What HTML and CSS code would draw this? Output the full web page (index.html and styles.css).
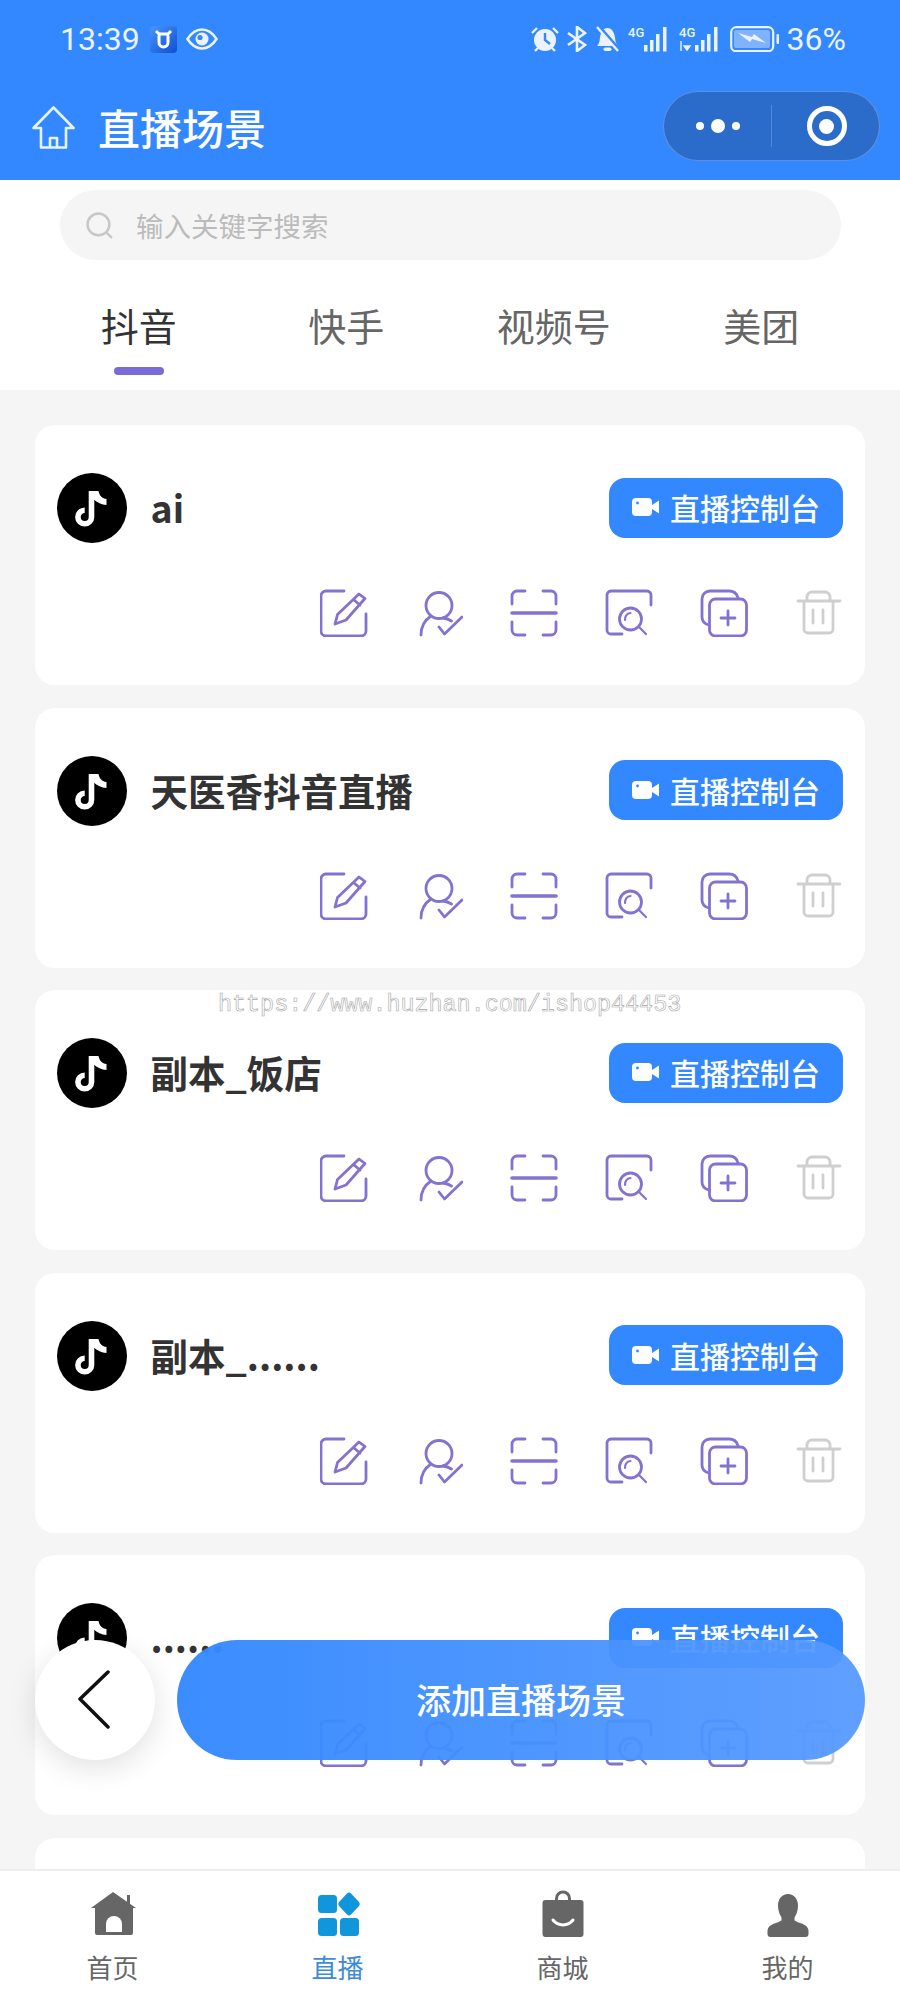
FILE: index.html
```html
<!DOCTYPE html>
<html>

<head>
    <title>直播场景</title>
    <link rel="stylesheet" href="styles.css">
</head>

<body>
    <!-- shared icons -->
    <svg class="defs" width="0" height="0">
        <symbol id="i-tiktok" viewBox="0 0 70 70">
            <path d="M34.500 18V44a6.800 6.800 0 1 1-6.800-6.800" fill="none" stroke="#fff" stroke-width="5.600" />
            <path d="M36.500 18h5c.8 4.500 3.600 7.500 8 8v6c-4.800-.2-9.500-2.400-13-5.800z" fill="#fff" />
        </symbol>
        <symbol id="i-camera" viewBox="0 0 28 20">
            <rect x="0" y="1" width="20" height="18" rx="4" fill="#fff" />
            <path d="M20 8l7-4.500v13l-7-4.500z" fill="#fff" />
            <circle cx="5.500" cy="6" r="1.400" fill="#3388ff" />
        </symbol>
        <symbol id="i-edit" viewBox="0 0 48 48">
            <path d="M24 2H6a5 5 0 0 0-5 5V42a5 5 0 0 0 5 5H41a5 5 0 0 0 5-5V25" />
            <path d="M39 5l6 4.500L26 31l-11 4 2.500-9.500zM34 11l6 5" />
        </symbol>
        <symbol id="i-check" viewBox="0 0 48 48">
            <circle cx="24" cy="16.500" r="13" />
            <path d="M6 46C6 37 10 31 16 27M28 29c3 .4 6 1.500 8.500 3M24 38l5.500 7L47 28" />
        </symbol>
        <symbol id="i-scan" viewBox="0 0 48 48">
            <path d="M2 15V7a5 5 0 0 1 5-5H15M33 2h8a5 5 0 0 1 5 5v8M2 33v8a5 5 0 0 0 5 5h8M33 46h8a5 5 0 0 0 5-5v-8" />
            <path d="M2 24H46" stroke-width="3.600" />
        </symbol>
        <symbol id="i-find" viewBox="0 0 48 48">
            <path d="M46 16V6a4 4 0 0 0-4-4H6A4 4 0 0 0 2 6V41a4 4 0 0 0 4 4H17" />
            <circle cx="25.500" cy="30" r="11" />
            <path d="M34 38l7 7M20 31c0-3.500 2-6.500 5.500-7" stroke-width="2.200" />
        </symbol>
        <symbol id="i-copy" viewBox="0 0 48 48">
            <rect x="9.500" y="10" width="37" height="37" rx="6" />
            <path d="M38 9C37 5 34 2 29 2H10a8 8 0 0 0-8 8V28c0 4 3 7 7 8M28 22V36M21 29H35" />
        </symbol>
        <symbol id="i-trash" viewBox="0 0 48 48">
            <path d="M3 12H45M12 12V8a5 5 0 0 1 5-5H30a5 5 0 0 1 5 5v4M9 12V40a4 4 0 0 0 4 4H34a4 4 0 0 0 4-4V12M18 21V34M28 21V34" />
        </symbol>
    </svg>

    <div class="page">
        <header class="top">
            <div class="status">
                <div class="status-left">
                    <span class="clock">13:39</span>
                    <svg class="st-app" viewBox="0 0 27 27">
                        <defs>
                            <linearGradient id="appbg" x1="0" y1="0" x2="1" y2="1">
                                <stop offset="0" stop-color="#4a95ff" />
                                <stop offset="1" stop-color="#0d4fd0" />
                            </linearGradient>
                        </defs>
                        <rect width="27" height="27" rx="4" fill="url(#appbg)" />
                        <path d="M8 8h11M9 9.500v7a4.500 4.500 0 0 0 9 0v-7M6 5l3 3M21 5l-3 3" fill="none" stroke="#fff" stroke-width="3" />
                    </svg>
                    <svg class="st-eye" viewBox="0 0 32 22">
                        <path d="M1.500 11C6 4 11 1.500 16 1.500S26 4 30.500 11C26 18 21 20.500 16 20.500S6 18 1.500 11z" fill="none" stroke="#eaf3ff" stroke-width="2.600" />
                        <circle cx="16" cy="11" r="6.500" fill="#eaf3ff" />
                        <circle cx="14" cy="9.500" r="2.600" fill="#3388ff" />
                    </svg>
                </div>
                <div class="status-right">
                    <svg class="st-alarm" viewBox="0 0 28 26">
                        <circle cx="14" cy="14" r="11" fill="#eaf3ff" />
                        <path d="M14 7v7l5 4" fill="none" stroke="#3388ff" stroke-width="2.400" />
                        <path d="M1 7l5-5M27 7l-5-5M4 25l3-3M24 25l-3-3" fill="none" stroke="#eaf3ff" stroke-width="2.400" />
                    </svg>
                    <svg class="st-blue" viewBox="0 0 21 26">
                        <path d="M2 7l17 12-8 6V1l8 6L2 19" fill="none" stroke="#eaf3ff" stroke-width="2.600" />
                    </svg>
                    <svg class="st-bell" viewBox="0 0 25 26">
                        <path d="M2 20c2-2 2.500-4 3-8.500C6 5 9 2 12.500 2S19 5 20 11.500c.5 4.500 1 6.500 3 8.500z" fill="#eaf3ff" />
                        <rect x="8.500" y="21.500" width="8" height="3.500" rx="1.700" fill="#eaf3ff" />
                        <path d="M4 1l20 23" stroke="#3388ff" stroke-width="4" />
                        <path d="M2 1l21 24" stroke="#eaf3ff" stroke-width="2.400" />
                    </svg>
                    <svg class="st-signal" viewBox="0 0 43 26">
                        <text x="0" y="11" class="st-tiny">4G</text>
                        <path d="M16 19h3.500v6.500H16zM22 14h3.500v11.500H22zM28 8h3.500v17.500H28zM35 1h3.500v24.500H35z" fill="#eaf3ff" />
                    </svg>
                    <svg class="st-signal" viewBox="0 0 43 26">
                        <text x="0" y="11" class="st-tiny">4G</text>
                        <path d="M2 15v10M5 20h6l-3 4z" fill="#eaf3ff" stroke="#eaf3ff" stroke-width="1.400" />
                        <path d="M16 19h3.500v6.500H16zM22 14h3.500v11.500H22zM28 8h3.500v17.500H28zM35 1h3.500v24.500H35z" fill="#eaf3ff" />
                    </svg>
                    <svg class="st-batt" viewBox="0 0 50 26">
                        <rect x="1.200" y="1.200" width="42" height="24" rx="5" fill="none" stroke="#eaf3ff" stroke-width="2.200" />
                        <rect x="4" y="4" width="36" height="18" rx="2" fill="#7fb2ff" />
                        <path d="M8 7l14 4 2-3 12 9-14-4-2 3z" fill="#eaf3ff" />
                        <rect x="46.500" y="8" width="2.500" height="10" rx="1" fill="#eaf3ff" />
                    </svg>
                    <span class="percent">36%</span>
                </div>
            </div>
            <div class="nav">
                <svg class="nav-home" viewBox="0 0 43 43">
                    <path d="M1.500 22L21.500 1.500 41.500 22H34V41.500H9V22zM18 41.500V32h7v9.500" fill="none" stroke="#e6f4ff" stroke-width="2.600" stroke-linejoin="round" />
                </svg>
                <h1 class="nav-title">直播场景</h1>
                <div class="capsule">
                    <div class="capsule-more">
                        <i class="dot"></i><i class="dot dot-big"></i><i class="dot"></i>
                    </div>
                    <div class="capsule-line"></div>
                    <div class="capsule-close"><i class="ring"></i></div>
                </div>
            </div>
        </header>

        <div class="search-wrap">
            <div class="search">
                <svg class="search-icon" viewBox="0 0 26 26">
                    <circle cx="12" cy="12" r="10.500" fill="none" stroke="#c8c8c8" stroke-width="2.400" />
                    <path d="M20 20l5 5" stroke="#c8c8c8" stroke-width="2.400" />
                </svg>
                <span>输入关键字搜索</span>
            </div>
        </div>

        <div class="tabs">
            <div class="tab tab-on">抖音</div>
            <div class="tab">快手</div>
            <div class="tab">视频号</div>
            <div class="tab">美团</div>
        </div>

        <div class="list">
            <div class="card">
                <div class="card-head">
                    <svg class="avatar"><use href="#i-tiktok" /></svg>
                    <div class="name">ai</div>
                    <div class="console"><svg class="camera"><use href="#i-camera" /></svg>直播控制台</div>
                </div>
                <div class="tools">
                    <svg class="tool"><use href="#i-edit" /></svg>
                    <svg class="tool"><use href="#i-check" /></svg>
                    <svg class="tool"><use href="#i-scan" /></svg>
                    <svg class="tool"><use href="#i-find" /></svg>
                    <svg class="tool"><use href="#i-copy" /></svg>
                    <svg class="tool tool-off"><use href="#i-trash" /></svg>
                </div>
            </div>
            <div class="card">
                <div class="card-head">
                    <svg class="avatar"><use href="#i-tiktok" /></svg>
                    <div class="name">天医香抖音直播</div>
                    <div class="console"><svg class="camera"><use href="#i-camera" /></svg>直播控制台</div>
                </div>
                <div class="tools">
                    <svg class="tool"><use href="#i-edit" /></svg>
                    <svg class="tool"><use href="#i-check" /></svg>
                    <svg class="tool"><use href="#i-scan" /></svg>
                    <svg class="tool"><use href="#i-find" /></svg>
                    <svg class="tool"><use href="#i-copy" /></svg>
                    <svg class="tool tool-off"><use href="#i-trash" /></svg>
                </div>
            </div>
            <div class="card">
                <div class="card-head">
                    <svg class="avatar"><use href="#i-tiktok" /></svg>
                    <div class="name">副本_饭店</div>
                    <div class="console"><svg class="camera"><use href="#i-camera" /></svg>直播控制台</div>
                </div>
                <div class="tools">
                    <svg class="tool"><use href="#i-edit" /></svg>
                    <svg class="tool"><use href="#i-check" /></svg>
                    <svg class="tool"><use href="#i-scan" /></svg>
                    <svg class="tool"><use href="#i-find" /></svg>
                    <svg class="tool"><use href="#i-copy" /></svg>
                    <svg class="tool tool-off"><use href="#i-trash" /></svg>
                </div>
            </div>
            <div class="card">
                <div class="card-head">
                    <svg class="avatar"><use href="#i-tiktok" /></svg>
                    <div class="name">副本_......</div>
                    <div class="console"><svg class="camera"><use href="#i-camera" /></svg>直播控制台</div>
                </div>
                <div class="tools">
                    <svg class="tool"><use href="#i-edit" /></svg>
                    <svg class="tool"><use href="#i-check" /></svg>
                    <svg class="tool"><use href="#i-scan" /></svg>
                    <svg class="tool"><use href="#i-find" /></svg>
                    <svg class="tool"><use href="#i-copy" /></svg>
                    <svg class="tool tool-off"><use href="#i-trash" /></svg>
                </div>
            </div>
            <div class="card">
                <div class="card-head">
                    <svg class="avatar"><use href="#i-tiktok" /></svg>
                    <div class="name">......</div>
                    <div class="console"><svg class="camera"><use href="#i-camera" /></svg>直播控制台</div>
                </div>
                <div class="tools">
                    <svg class="tool"><use href="#i-edit" /></svg>
                    <svg class="tool"><use href="#i-check" /></svg>
                    <svg class="tool"><use href="#i-scan" /></svg>
                    <svg class="tool"><use href="#i-find" /></svg>
                    <svg class="tool"><use href="#i-copy" /></svg>
                    <svg class="tool tool-off"><use href="#i-trash" /></svg>
                </div>
            </div>
            <div class="card"></div>
        </div>

        <nav class="tabbar">
            <div class="bar-item">
                <svg class="bar-icon" viewBox="0 0 48 48">
                    <path d="M38 5h3v9h-3z" fill="#666" />
                    <path d="M24 2L47 18H2z" fill="#666" />
                    <path d="M6 17H44V43a2 2 0 0 1-2 2H8a2 2 0 0 1-2-2z" fill="#666" />
                    <path d="M17 42V34a8 8 0 0 1 16 0v8z" fill="#fff" />
                </svg>
                <span>首页</span>
            </div>
            <div class="bar-item bar-on">
                <svg class="bar-icon" viewBox="0 0 48 48">
                    <rect x="4" y="5" width="19" height="18" rx="3.500" fill="#1296db" />
                    <rect x="4" y="28" width="19" height="18" rx="3.500" fill="#1296db" />
                    <rect x="26" y="28" width="19" height="18" rx="3.500" fill="#1296db" />
                    <path d="M33 3.500a3 3 0 0 1 4 0l8 8.500a3 3 0 0 1 0 4l-8 8.500a3 3 0 0 1-4 0l-8-8.500a3 3 0 0 1 0-4z" fill="#1296db" />
                </svg>
                <span>直播</span>
            </div>
            <div class="bar-item">
                <svg class="bar-icon" viewBox="0 0 48 48">
                    <path d="M17.500 11V8.500a6.500 6.500 0 0 1 13 0V11" fill="none" stroke="#666" stroke-width="3" />
                    <rect x="3.500" y="10" width="41" height="37" rx="3" fill="#666" />
                    <path d="M14 30c5 6.500 15 6.500 20 0" fill="none" stroke="#fff" stroke-width="3" stroke-linecap="round" />
                </svg>
                <span>商城</span>
            </div>
            <div class="bar-item">
                <svg class="bar-icon" viewBox="0 0 48 48">
                    <path d="M24 4c6 0 10 5 10 11.500 0 5-1.500 9-3.500 12v3c3 2.500 13.500 3 14 10V44a3 3 0 0 1-3 3H6.500a3 3 0 0 1-3-3v-3.500c.5-7 11-7.500 14-10v-3c-2-3-3.500-7-3.500-12C14 9 18 4 24 4z" fill="#666" />
                </svg>
                <span>我的</span>
            </div>
        </nav>

        <!-- floating actions above the list -->
        <div class="back">
            <svg class="back-icon" viewBox="0 0 34 60">
                <path d="M31 2L3 29 31 57" fill="none" stroke="#111" stroke-width="3.500" stroke-linecap="round" stroke-linejoin="round" />
            </svg>
        </div>
        <div class="add">添加直播场景</div>

        <div class="mark">https://www.huzhan.com/ishop44453</div>
    </div>
</body>

</html>
```

FILE: styles.css
```css
body,
html {
    margin: 0;
    padding: 0;
    width: 100%;
    height: 100%;
}

body {
    background-color: #f5f5f5;
    font-family: "Noto Sans CJK SC", "Noto Sans", sans-serif;
}

.defs {
    position: absolute;
}

.page {
    position: relative;
    display: flex;
    flex-direction: column;
    width: 900px;
    height: 2000px;
    overflow: hidden;
    background-color: #f5f5f5;
}

/* blue header */
.top {
    flex: none;
    height: 180px;
    background-color: #3388ff;
}

.status {
    display: flex;
    justify-content: space-between;
    align-items: center;
    height: 78px;
    padding: 0 54px 0 60px;
    color: #eaf3ff;
    font-family: Roboto, sans-serif;
    font-size: 32px;
}

.status-left,
.status-right {
    display: flex;
    align-items: center;
}

.clock {
    width: 90px;
}

.st-app {
    width: 27px;
    height: 27px;
}

.st-eye {
    width: 32px;
    height: 22px;
    margin-left: 9px;
}

.st-alarm {
    width: 28px;
    height: 26px;
}

.st-blue {
    width: 21px;
    height: 26px;
    margin-left: 7px;
}

.st-bell {
    width: 25px;
    height: 26px;
    margin-left: 8px;
}

.st-signal {
    width: 43px;
    height: 26px;
    margin-left: 8px;
}

.st-tiny {
    fill: #eaf3ff;
    font-family: Roboto, sans-serif;
    font-size: 13px;
    font-weight: 500;
}

.st-batt {
    width: 50px;
    height: 26px;
    margin-left: 8px;
}

.percent {
    margin-left: 7px;
}

.nav {
    display: flex;
    align-items: center;
    height: 102px;
    padding: 0 20px 0 32px;
}

.nav-home {
    width: 43px;
    height: 43px;
    margin-top: -4px;
}

.nav-title {
    flex: 1;
    margin: -6px 0 0 23px;
    color: #fff;
    font-size: 42px;
    font-weight: 500;
}

.capsule {
    display: flex;
    align-items: center;
    box-sizing: border-box;
    width: 217px;
    height: 70px;
    margin-top: -6px;
    border: 1px solid rgba(255, 255, 255, 0.25);
    border-radius: 35px;
    background-color: #2b6ccb;
}

.capsule-more {
    display: flex;
    justify-content: center;
    align-items: center;
    gap: 7px;
    width: 107px;
}

.dot {
    width: 8px;
    height: 8px;
    border-radius: 50%;
    background-color: #fff;
}

.dot-big {
    width: 14px;
    height: 14px;
}

.capsule-line {
    width: 1px;
    height: 42px;
    background-color: rgba(255, 255, 255, 0.2);
}

.capsule-close {
    display: flex;
    flex: 1;
    justify-content: center;
    padding-left: 2px;
}

.ring {
    display: flex;
    justify-content: center;
    align-items: center;
    box-sizing: border-box;
    width: 40px;
    height: 40px;
    border: 5px solid #fff;
    border-radius: 50%;
}

.ring::after {
    content: "";
    width: 15px;
    height: 15px;
    border-radius: 50%;
    background-color: #fff;
}

/* search and tabs */
.search-wrap {
    flex: none;
    padding: 10px 59px 0 60px;
    background-color: #fff;
}

.search {
    display: flex;
    align-items: center;
    gap: 23px;
    height: 70px;
    padding-left: 26px;
    border-radius: 35px;
    background-color: #f5f5f5;
    color: #bbb;
    font-size: 27.500px;
}

.search-icon {
    width: 27px;
    height: 27px;
}

.tabs {
    display: flex;
    flex: none;
    height: 130px;
    padding: 0 35px;
    box-sizing: border-box;
    background-color: #fff;
}

.tab {
    flex: 1;
    padding-top: 40px;
    color: #666;
    font-size: 38px;
    line-height: 50px;
    text-align: center;
}

.tab-on {
    color: #333;
}

.tab-on::after {
    content: "";
    display: block;
    width: 50px;
    height: 8px;
    margin: 17px auto 0;
    border-radius: 4px;
    background-color: #7b6bd6;
}

/* scene cards */
.list {
    display: flex;
    flex: 1;
    flex-direction: column;
    gap: 22.500px;
    min-height: 0;
    padding: 35px 35px 0;
    overflow: hidden;
}

.card {
    flex: none;
    box-sizing: border-box;
    height: 260px;
    padding: 48px 22px 47px;
    border-radius: 20px;
    background-color: #fff;
}

.card-head {
    display: flex;
    align-items: center;
}

.avatar {
    flex: none;
    width: 70px;
    height: 70px;
    border-radius: 50%;
    background-color: #000;
}

.name {
    flex: 1;
    margin: -3px 0 0 23.500px;
    color: #333;
    font-size: 37.500px;
    font-weight: 700;
}

.console {
    display: flex;
    align-items: center;
    justify-content: center;
    gap: 10px;
    box-sizing: border-box;
    width: 234px;
    height: 60px;
    margin-top: -1px;
    padding-bottom: 1px;
    border-radius: 16px;
    background-color: #3388ff;
    color: #fff;
    font-size: 30px;
    font-weight: 500;
}

.camera {
    width: 28px;
    height: 20px;
}

.tools {
    display: flex;
    justify-content: flex-end;
    gap: 47px;
    margin-top: 46px;
}

.tool {
    width: 48px;
    height: 48px;
    fill: none;
    stroke: #8373d1;
    stroke-width: 2.800;
    stroke-linecap: round;
    stroke-linejoin: round;
}

.tool-off {
    stroke: #cfcfcf;
}

/* bottom navigation */
.tabbar {
    display: flex;
    flex: none;
    height: 131px;
    box-sizing: border-box;
    border-top: 2px solid #eee;
    background-color: #fff;
}

.bar-item {
    display: flex;
    flex: 1;
    flex-direction: column;
    align-items: center;
    padding-top: 19px;
    color: #666;
    font-size: 26px;
    line-height: 30px;
}

.bar-on {
    color: #3f8bd6;
}

.bar-icon {
    width: 48px;
    height: 48px;
    margin-bottom: 14px;
}

/* floating buttons */
.back {
    position: absolute;
    left: 35px;
    top: 1640px;
    display: flex;
    justify-content: center;
    align-items: center;
    width: 120px;
    height: 120px;
    border-radius: 50%;
    background-color: #fff;
    box-shadow: 0 8px 30px rgba(0, 0, 0, 0.12);
}

.back-icon {
    width: 34px;
    height: 60px;
    margin-left: -3px;
}

.add {
    position: absolute;
    left: 177px;
    top: 1640px;
    width: 688px;
    height: 120px;
    border-radius: 60px;
    background: linear-gradient(90deg, rgba(51, 136, 255, 0.96), rgba(85, 153, 255, 0.94));
    color: #fff;
    font-size: 35px;
    font-weight: 500;
    line-height: 118px;
    text-align: center;
}

.mark {
    position: absolute;
    left: 218px;
    top: 990px;
    color: transparent;
    font-family: "Liberation Mono", monospace;
    font-size: 23.400px;
    line-height: 30px;
    white-space: nowrap;
    -webkit-text-stroke: 0.6px #a8a8a8;
}
```
